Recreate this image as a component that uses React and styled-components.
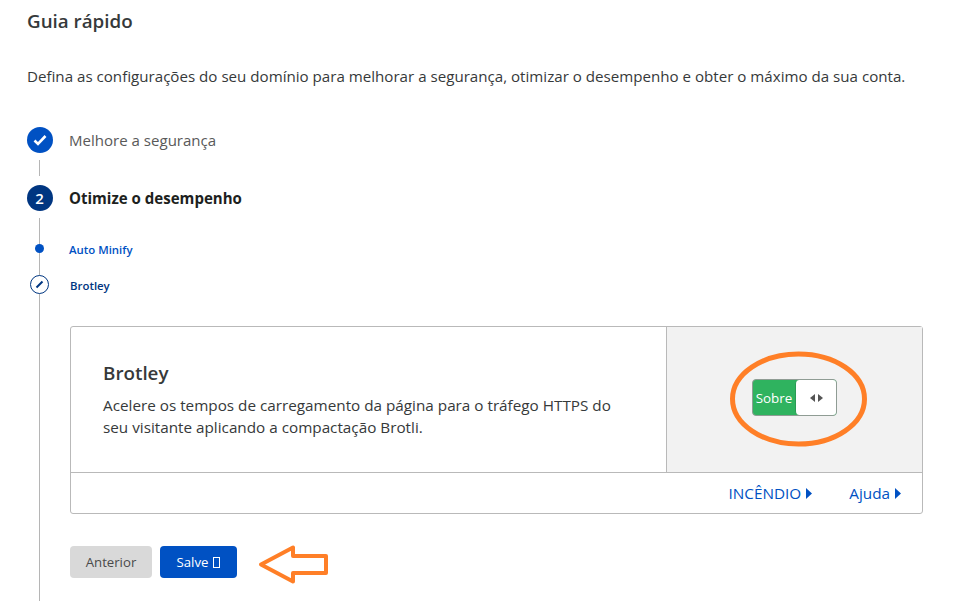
import React from "react";
import styled, { createGlobalStyle } from "styled-components";

const GlobalStyle = createGlobalStyle`
  html, body {
    margin: 0;
    padding: 0;
    background: #fff;
    overflow: hidden;
  }
  body {
    font-family: "Open Sans", "Noto Sans", "Liberation Sans", sans-serif;
    color: #313131;
  }
`;

const Page = styled.div`
  position: relative;
  width: 972px;
  height: 601px;
  overflow: hidden;
  padding: 9px 0 0 27px;
  box-sizing: border-box;
`;

const Title = styled.h1`
  margin: 0;
  font-size: 18.8px;
  line-height: 24px;
  font-weight: 600;
  color: #36393a;
`;

const Intro = styled.p`
  margin: 31px 0 39px;
  font-size: 15.13px;
  line-height: 24px;
  color: #36393a;
  white-space: nowrap;
`;

const Step = styled.div`
  display: flex;
  align-items: center;
  gap: 16px;
  height: 26px;
`;

const StepCircle = styled.div`
  width: 26px;
  height: 26px;
  box-sizing: border-box;
  padding-right: ${(p) => (p.$current ? "1px" : "0")};
  border-radius: 50%;
  background: ${(p) => (p.$current ? "#003681" : "#0051c3")};
  color: #fff;
  display: flex;
  align-items: center;
  justify-content: center;
  font-size: 15px;
  font-weight: 600;
`;

const StepLabel = styled.span`
  font-size: 15.05px;
  font-weight: ${(p) => (p.$current ? 700 : 400)};
  color: ${(p) => (p.$current ? "#1d1f20" : "#595959")};
`;

const Connector = styled.div`
  width: 1px;
  height: 16px;
  margin: 7px 0 9px 12px;
  background: #b5b5b5;
`;

const Rail = styled.div`
  margin: 7px 0 0 12px;
  padding: 20px 0 0 30px;
  border-left: 1px solid #b5b5b5;
  height: 400px;
`;

const SubStep = styled.div`
  position: relative;
  display: flex;
  align-items: center;
  height: 22px;
  margin-bottom: 14px;
`;

const Dot = styled.span`
  position: absolute;
  left: -35px;
  top: 6px;
  width: 9px;
  height: 9px;
  border-radius: 50%;
  background: #0051c3;
`;

const PencilMark = styled.span`
  position: absolute;
  left: -40px;
  top: 1px;
  width: 19px;
  height: 19px;
  box-sizing: border-box;
  border: 1px solid #003681;
  border-radius: 50%;
  background: #fff;
  display: flex;
  align-items: center;
  justify-content: center;
`;

const SubLabel = styled.span`
  font-size: 11.4px;
  font-weight: 600;
  margin-left: ${(p) => (p.$current ? "0" : "-1px")};
  color: ${(p) => (p.$current ? "#003681" : "#0051c3")};
`;

const Card = styled.section`
  width: 853px;
  height: 188px;
  margin-top: 30px;
  box-sizing: border-box;
  border: 1px solid #b9b9b9;
  border-radius: 3px;
  display: flex;
  flex-direction: column;
`;

const CardMain = styled.div`
  height: 145px;
  display: flex;
  border-bottom: 1px solid #b9b9b9;
`;

const CardText = styled.div`
  flex: 1;
  padding: 33px 32px 0;
`;

const CardTitle = styled.h2`
  margin: 0 0 8px;
  font-size: 18.8px;
  line-height: 26px;
  font-weight: 600;
  color: #36393a;
`;

const CardBody = styled.p`
  margin: 0;
  font-size: 15.27px;
  line-height: 22px;
  color: #36393a;
  white-space: nowrap;
`;

const CardSide = styled.div`
  width: 256px;
  box-sizing: border-box;
  border-left: 1px solid #b9b9b9;
  background: #f2f2f2;
  display: flex;
  align-items: center;
  justify-content: center;
  padding-bottom: 4px;
`;

const Toggle = styled.div`
  width: 85px;
  height: 37px;
  box-sizing: border-box;
  border: 1px solid #8f9c94;
  border-radius: 4px;
  background: #2fb35f;
  display: flex;
  overflow: hidden;
`;

const ToggleLabel = styled.span`
  width: 42px;
  color: #fff;
  font-size: 13.4px;
  display: flex;
  align-items: center;
  justify-content: center;
`;

const ToggleKnob = styled.span`
  flex: 1;
  background: #fff;
  border-left: 1px solid #2a9a54;
  border-radius: 4px 0 0 4px;
  display: flex;
  align-items: center;
  justify-content: center;
  gap: 3px;
`;

const CardFooter = styled.div`
  flex: 1;
  display: flex;
  align-items: center;
  justify-content: flex-end;
  gap: 37px;
  padding: 0 21px 0 0;
`;

const FooterLink = styled.a`
  color: #0051c3;
  font-size: 15.3px;
  display: flex;
  align-items: center;
  gap: 5px;
`;

const Actions = styled.div`
  display: flex;
  gap: 8px;
  margin-top: 32px;
`;

const Button = styled.button`
  height: 32px;
  width: ${(p) => (p.$primary ? "77px" : "82px")};
  border: none;
  border-radius: 4px;
  background: ${(p) => (p.$primary ? "#0051c3" : "#d9d9d9")};
  color: ${(p) => (p.$primary ? "#fff" : "#4a4a4a")};
  font-family: inherit;
  font-size: 13.2px;
  padding: 0;
  display: flex;
  align-items: center;
  justify-content: center;
  gap: 5px;
`;

const MissingGlyph = styled.span`
  width: 7px;
  height: 11px;
  box-sizing: border-box;
  border: 1px solid #fff;
`;

const Annotation = styled.svg`
  position: absolute;
  left: 0;
  top: 0;
  pointer-events: none;
`;

function Caret({ color, flip, width = 5, height = 8 }) {
  return (
    <svg width={width} height={height} viewBox="0 0 6 9" preserveAspectRatio="none">
      <path d={flip ? "M6 0 L0 4.5 L6 9 Z" : "M0 0 L6 4.5 L0 9 Z"} fill={color} />
    </svg>
  );
}

export default function App() {
  return (
    <>
      <GlobalStyle />
      <Page>
        <Title>Guia rápido</Title>
        <Intro>
          Defina as configurações do seu domínio para melhorar a segurança, otimizar o desempenho e obter o máximo da sua conta.
        </Intro>

        <Step>
          <StepCircle>
            <svg width="14" height="12" viewBox="0 0 14 12">
              <path d="M1.5 6.5 L5 10 L12.5 2" fill="none" stroke="#fff" strokeWidth="2.6" />
            </svg>
          </StepCircle>
          <StepLabel>Melhore a segurança</StepLabel>
        </Step>
        <Connector />
        <Step>
          <StepCircle $current>2</StepCircle>
          <StepLabel $current>Otimize o desempenho</StepLabel>
        </Step>

        <Rail>
          <SubStep>
            <Dot />
            <SubLabel>Auto Minify</SubLabel>
          </SubStep>
          <SubStep>
            <PencilMark>
              <svg width="11" height="11" viewBox="0 0 11 11">
                <path d="M2.5 8.5 L8.5 2.5" stroke="#003681" strokeWidth="2" fill="none" />
              </svg>
            </PencilMark>
            <SubLabel $current>Brotley</SubLabel>
          </SubStep>

          <Card>
            <CardMain>
              <CardText>
                <CardTitle>Brotley</CardTitle>
                <CardBody>
                  Acelere os tempos de carregamento da página para o tráfego HTTPS do
                  <br />
                  seu visitante aplicando a compactação Brotli.
                </CardBody>
              </CardText>
              <CardSide>
                <Toggle>
                  <ToggleLabel>Sobre</ToggleLabel>
                  <ToggleKnob>
                    <Caret color="#555" flip />
                    <Caret color="#555" />
                  </ToggleKnob>
                </Toggle>
              </CardSide>
            </CardMain>
            <CardFooter>
              <FooterLink>
                INCÊNDIO <Caret color="#0051c3" width={6} height={11} />
              </FooterLink>
              <FooterLink>
                Ajuda <Caret color="#0051c3" width={6} height={11} />
              </FooterLink>
            </CardFooter>
          </Card>

          <Actions>
            <Button>Anterior</Button>
            <Button $primary>
              Salve <MissingGlyph />
            </Button>
          </Actions>
        </Rail>

        <Annotation width="972" height="601" viewBox="0 0 972 601">
          <ellipse cx="798.5" cy="399" rx="66" ry="45" fill="none" stroke="#ff7f27" strokeWidth="5" />
          <path
            d="M261 564.5 L293 547.5 L293 556 L326 556 L326 573 L293 573 L293 581.5 Z"
            fill="none"
            stroke="#ff7f27"
            strokeWidth="4"
            strokeLinejoin="round"
          />
        </Annotation>
      </Page>
    </>
  );
}
